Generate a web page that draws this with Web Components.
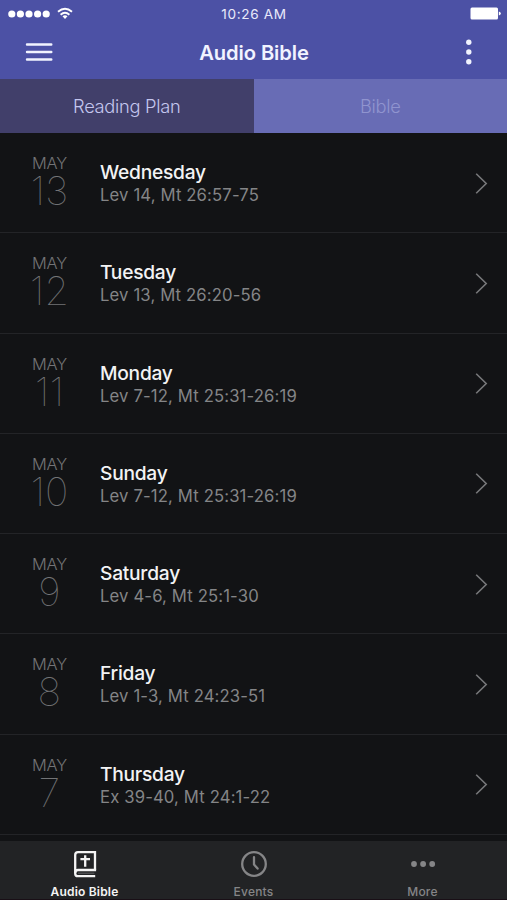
<!DOCTYPE html>
<html lang="en">
<head>
<meta charset="utf-8">
<title>Audio Bible</title>
<style>
  body {
    margin: 0;
    background: #121315;
    font-family: Inter, "Liberation Sans", sans-serif;
  }
</style>
</head>
<body>
<audio-bible-app>
  <status-bar time="10:26 AM"></status-bar>
  <nav-bar titulo="Audio Bible"></nav-bar>
  <tab-strip>
    <tab-item active>Reading Plan</tab-item>
    <tab-item>Bible</tab-item>
  </tab-strip>
  <reading-list>
    <reading-row month="MAY" day="13" weekday="Wednesday">Lev 14, Mt 26:57-75</reading-row>
    <reading-row month="MAY" day="12" weekday="Tuesday">Lev 13, Mt 26:20-56</reading-row>
    <reading-row month="MAY" day="11" weekday="Monday">Lev 7-12, Mt 25:31-26:19</reading-row>
    <reading-row month="MAY" day="10" weekday="Sunday">Lev 7-12, Mt 25:31-26:19</reading-row>
    <reading-row month="MAY" day="9" weekday="Saturday">Lev 4-6, Mt 25:1-30</reading-row>
    <reading-row month="MAY" day="8" weekday="Friday">Lev 1-3, Mt 24:23-51</reading-row>
    <reading-row month="MAY" day="7" weekday="Thursday">Ex 39-40, Mt 24:1-22</reading-row>
  </reading-list>
  <bottom-bar>
    <bottom-item active label="Audio Bible">
      <svg width="24" height="28" viewBox="0 0 24 28" fill="none" stroke="currentColor" stroke-width="2.3">
        <path d="M22 19.9V2.1H5Q2.2 2.1 2.2 5V23.4Q2.2 26.2 5 26.2H22.2"/>
        <path d="M2.2 23Q2.2 20 5 20H23.1"/>
        <path d="M12.2 5.2V16.8M7.4 9.2H17"/>
        <path d="M5 23.2H21.4" stroke-width="1" opacity=".3"/>
      </svg>
    </bottom-item>
    <bottom-item label="Events">
      <svg width="28" height="28" viewBox="0 0 28 28" fill="none" stroke="currentColor" stroke-width="2.3" stroke-linecap="round" stroke-linejoin="round">
        <circle cx="14" cy="14" r="11.8"/>
        <path d="M14 7.2V14.6L17.6 18.6"/>
      </svg>
    </bottom-item>
    <bottom-item label="More">
      <svg width="26" height="28" viewBox="0 0 26 28" fill="currentColor">
        <circle cx="4" cy="14" r="2.9"/>
        <circle cx="13.1" cy="14" r="2.9"/>
        <circle cx="22.2" cy="14" r="2.9"/>
      </svg>
    </bottom-item>
  </bottom-bar>
</audio-bible-app>

<script>
class BaseElement extends HTMLElement {
  constructor() {
    super();
    this.attachShadow({ mode: 'open' });
    this.shadowRoot.innerHTML = this.template();
  }
}

class AudioBibleApp extends BaseElement {
  template() {
    return `
      <style>
        :host {
          display: flex;
          flex-direction: column;
          height: 900px;
          overflow: hidden;
          background: #121315;
        }
      </style>
      <slot></slot>
    `;
  }
}

class StatusBar extends BaseElement {
  template() {
    return `
      <style>
        :host {
          display: grid;
          grid-template-columns: 1fr auto 1fr;
          align-items: center;
          flex: none;
          height: 27px;
          box-sizing: border-box;
          padding: 0 7px 0 8px;
          background: #4c51a5;
          color: #fff;
        }
        .signal { display: flex; align-items: center; gap: 7px; }
        .time { font-size: 13.6px; letter-spacing: 0.65px; color: #e9eafb; }
        .battery { justify-self: end; margin-right: -1px; }
        svg { display: block; }
      </style>
      <div class="signal">
        <svg width="42" height="8" viewBox="0 0 42 8" fill="currentColor">
          <circle cx="3.8" cy="4" r="3.6"/>
          <circle cx="12.4" cy="4" r="3.6"/>
          <circle cx="21" cy="4" r="3.6"/>
          <circle cx="29.6" cy="4" r="3.6"/>
          <circle cx="38.2" cy="4" r="3.6"/>
        </svg>
        <svg width="16" height="13" viewBox="0 0 16 13" fill="none" stroke="currentColor" stroke-width="1.9">
          <path d="M1 4.7Q8 -1.3 15 4.7"/>
          <path d="M3.6 7.7Q8 3.9 12.4 7.7"/>
          <path d="M5.5 9.3Q8 7.3 10.5 9.3L8 12Z" fill="currentColor" stroke="none"/>
        </svg>
      </div>
      <span class="time">${this.getAttribute('time')}</span>
      <svg class="battery" width="31" height="13" viewBox="0 0 31 13" fill="currentColor">
        <rect x="0.5" y="0.5" width="27.5" height="12" rx="1.5"/>
        <path d="M28.8 4.6Q30.8 5 30.8 6.5T28.8 8.4Z"/>
      </svg>
    `;
  }
}

class NavBar extends BaseElement {
  template() {
    return `
      <style>
        :host {
          display: grid;
          grid-template-columns: 1fr auto 1fr;
          align-items: center;
          flex: none;
          height: 52px;
          box-sizing: border-box;
          padding: 0 35px 2px 25px;
          background: #4c51a5;
          color: #f1f3ff;
        }
        h1 {
          margin: 1px 0 0 11px;
          font-size: 20.2px;
          line-height: 24px;
          font-weight: 600;
          letter-spacing: -0.12px;
        }
        svg { display: block; }
        .more { justify-self: end; }
      </style>
      <svg width="28" height="20" viewBox="0 0 28 20" stroke="currentColor" stroke-width="2.4" stroke-linecap="round">
        <path d="M2 2.5H26.3M2 10H26.3M2 17.5H26.3"/>
      </svg>
      <h1>${this.getAttribute('titulo')}</h1>
      <svg class="more" width="6" height="26" viewBox="0 0 6 26" fill="currentColor">
        <circle cx="2.8" cy="3.3" r="2.7"/>
        <circle cx="2.8" cy="13" r="2.7"/>
        <circle cx="2.8" cy="22.7" r="2.7"/>
      </svg>
    `;
  }
}

class TabStrip extends BaseElement {
  template() {
    return `
      <style>
        :host { display: flex; flex: none; height: 54px; }
      </style>
      <slot></slot>
    `;
  }
}

class TabItem extends BaseElement {
  template() {
    return `
      <style>
        :host {
          display: flex;
          flex: 1;
          align-items: center;
          justify-content: center;
          background: #686cb5;
          color: #9094cf;
          font-size: 18.3px;
          font-weight: 300;
          letter-spacing: -0.3px;
        }
        :host([active]) { background: #413f6a; color: #c4c6ee; }
      </style>
      <slot></slot>
    `;
  }
}

class ReadingList extends BaseElement {
  template() {
    return `
      <style>
        :host { display: block; flex: 1; min-height: 0; overflow: hidden; }
      </style>
      <slot></slot>
    `;
  }
}

class ReadingRow extends BaseElement {
  template() {
    return `
      <style>
        :host {
          display: flex;
          height: 100.25px;
          box-sizing: border-box;
          padding-right: 19px;
          border-bottom: 1px solid #232427;
        }
        .date {
          display: flex;
          flex-direction: column;
          align-items: center;
          width: 99px;
          padding-top: 20px;
          color: #737476;
        }
        .month { font-size: 16.4px; line-height: 20px; font-weight: 300; letter-spacing: -0.15px; }
        .day { font-size: 39.5px; line-height: 37px; font-weight: 100; letter-spacing: 0.2px; }
        .info { flex: 1; padding: 27px 0 0 1px; }
        h2 {
          margin: 0;
          font-size: 19.2px;
          line-height: 24px;
          font-weight: 500;
          letter-spacing: -0.25px;
          color: #f3f3f4;
        }
        p { margin: 0; font-size: 16.7px; line-height: 23px; letter-spacing: 0.13px; color: #848587; }
        svg { align-self: center; }
      </style>
      <div class="date">
        <span class="month">${this.getAttribute('month')}</span>
        <span class="day">${this.getAttribute('day')}</span>
      </div>
      <div class="info">
        <h2>${this.getAttribute('weekday')}</h2>
        <p><slot></slot></p>
      </div>
      <svg width="13" height="22" viewBox="0 0 13 22" fill="none" stroke="#77787a" stroke-width="1.6">
        <path d="M1.2 1.8L11.2 11.5L1.2 21.2"/>
      </svg>
    `;
  }
}

class BottomBar extends BaseElement {
  template() {
    return `
      <style>
        :host {
          display: flex;
          flex: none;
          height: 59px;
          background: #222325;
          box-sizing: border-box;
          border-bottom: 1px solid #190f16;
        }
      </style>
      <slot></slot>
    `;
  }
}

class BottomItem extends BaseElement {
  template() {
    return `
      <style>
        :host {
          display: flex;
          flex: 1;
          flex-direction: column;
          align-items: center;
          padding-top: 9px;
          color: #858587;
        }
        :host([active]) { color: #f4f4f4; }
        span {
          margin-top: 6px;
          font-size: 12px;
          line-height: 15px;
          font-weight: 500;
          letter-spacing: 0.2px;
        }
        :host([active]) span { font-weight: 600; }
        ::slotted(svg) { display: block; flex: none; }
      </style>
      <slot></slot>
      <span>${this.getAttribute('label')}</span>
    `;
  }
}

customElements.define('audio-bible-app', AudioBibleApp);
customElements.define('status-bar', StatusBar);
customElements.define('nav-bar', NavBar);
customElements.define('tab-strip', TabStrip);
customElements.define('tab-item', TabItem);
customElements.define('reading-list', ReadingList);
customElements.define('reading-row', ReadingRow);
customElements.define('bottom-bar', BottomBar);
customElements.define('bottom-item', BottomItem);
</script>
</body>
</html>
